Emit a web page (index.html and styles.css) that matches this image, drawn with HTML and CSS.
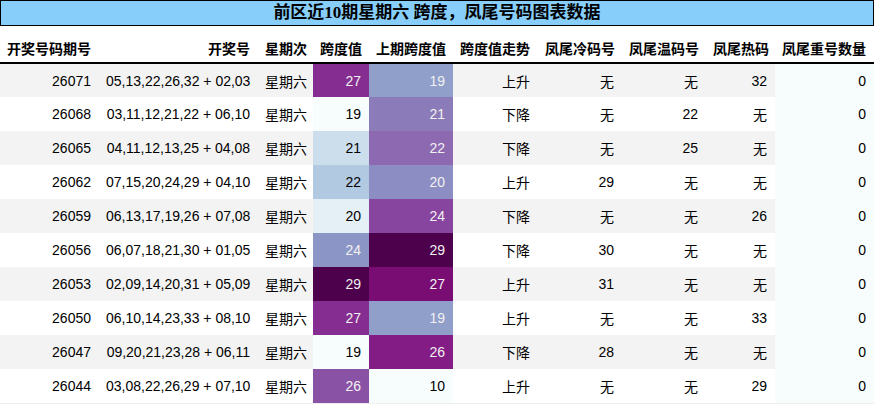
FILE: index.html
```html
<!DOCTYPE html>
<html lang="zh">
<head>
<meta charset="utf-8">
<link rel="stylesheet" href="styles.css">
</head>
<body>
<div class="wrap">
  <div class="title">前区近10期星期六 跨度，凤尾号码图表数据</div>
  <table class="grid">
    <colgroup>
      <col class="c1"><col class="c2"><col class="c3"><col class="c4"><col class="c5">
      <col class="c6"><col class="c7"><col class="c8"><col class="c9"><col class="c10">
    </colgroup>
    <thead>
      <tr>
        <th>开奖号码期号</th><th>开奖号</th><th>星期次</th><th>跨度值</th><th>上期跨度值</th>
        <th>跨度值走势</th><th>凤尾冷码号</th><th>凤尾温码号</th><th>凤尾热码</th><th>凤尾重号数量</th>
      </tr>
    </thead>
    <tbody>
      <tr class="odd">
        <td>26071</td><td>05,13,22,26,32 + 02,03</td><td>星期六</td>
        <td class="dk" style="background:#852d90">27</td><td class="dk" style="background:#909eca">19</td>
        <td>上升</td><td>无</td><td>无</td><td>32</td><td class="z">0</td>
      </tr>
      <tr>
        <td>26068</td><td>03,11,12,21,22 + 06,10</td><td>星期六</td>
        <td style="background:#f7fcfd">19</td><td class="dk" style="background:#8c7bb9">21</td>
        <td>下降</td><td>无</td><td>22</td><td>无</td><td class="z">0</td>
      </tr>
      <tr class="odd">
        <td>26065</td><td>04,11,12,13,25 + 04,08</td><td>星期六</td>
        <td style="background:#ccddec">21</td><td class="dk" style="background:#8c69b0">22</td>
        <td>下降</td><td>无</td><td>25</td><td>无</td><td class="z">0</td>
      </tr>
      <tr>
        <td>26062</td><td>07,15,20,24,29 + 04,10</td><td>星期六</td>
        <td style="background:#b2cae1">22</td><td class="dk" style="background:#8c8dc2">20</td>
        <td>上升</td><td>29</td><td>无</td><td>无</td><td class="z">0</td>
      </tr>
      <tr class="odd">
        <td>26059</td><td>06,13,17,19,26 + 07,08</td><td>星期六</td>
        <td style="background:#e5eff6">20</td><td class="dk" style="background:#88459f">24</td>
        <td>下降</td><td>无</td><td>无</td><td>26</td><td class="z">0</td>
      </tr>
      <tr>
        <td>26056</td><td>06,07,18,21,30 + 01,05</td><td>星期六</td>
        <td class="dk" style="background:#8c96c6">24</td><td class="dk" style="background:#4d004b">29</td>
        <td>下降</td><td>30</td><td>无</td><td>无</td><td class="z">0</td>
      </tr>
      <tr class="odd">
        <td>26053</td><td>02,09,14,20,31 + 05,09</td><td>星期六</td>
        <td class="dk" style="background:#4d004b">29</td><td class="dk" style="background:#790d74">27</td>
        <td>上升</td><td>31</td><td>无</td><td>无</td><td class="z">0</td>
      </tr>
      <tr>
        <td>26050</td><td>06,10,14,23,33 + 08,10</td><td>星期六</td>
        <td class="dk" style="background:#852d90">27</td><td class="dk" style="background:#909eca">19</td>
        <td>上升</td><td>无</td><td>无</td><td>33</td><td class="z">0</td>
      </tr>
      <tr class="odd">
        <td>26047</td><td>09,20,21,23,28 + 06,11</td><td>星期六</td>
        <td style="background:#f7fcfd">19</td><td class="dk" style="background:#831c85">26</td>
        <td>下降</td><td>28</td><td>无</td><td>无</td><td class="z">0</td>
      </tr>
      <tr>
        <td>26044</td><td>03,08,22,26,29 + 07,10</td><td>星期六</td>
        <td class="dk" style="background:#8a52a5">26</td><td style="background:#f7fcfd">10</td>
        <td>上升</td><td>无</td><td>无</td><td>29</td><td class="z">0</td>
      </tr>
    </tbody>
  </table>
</div>
</body>
</html>
```

FILE: styles.css
```css
html, body {
  margin: 0;
  padding: 0;
  background: #ffffff;
}

.wrap {
  width: 874px;
}

.title {
  box-sizing: border-box;
  height: 26px;
  background: #87cefa;
  border: 1px solid #000000;
  text-align: center;
  font-family: "Liberation Serif", "Noto Sans CJK SC", serif;
  font-weight: bold;
  font-size: 17px;
  line-height: 23px;
  color: #000000;
}

.grid {
  width: 874px;
  border-collapse: collapse;
  table-layout: fixed;
  font-family: "Liberation Sans", "Noto Sans CJK SC", sans-serif;
  font-size: 14px;
  color: #000000;
}

.c1 { width: 99px; }
.c2 { width: 159px; }
.c3 { width: 55px; }
.c4 { width: 56px; }
.c5 { width: 84px; }
.c6 { width: 85px; }
.c7 { width: 84px; }
.c8 { width: 84px; }
.c9 { width: 69px; }
.c10 { width: 99px; }

.grid th {
  height: 37px;
  padding: 8px 8px 0 7px;
  box-sizing: border-box;
  text-align: right;
  font-weight: bold;
  white-space: nowrap;
  border-bottom: 2px solid #000000;
  background: #ffffff;
}

.grid th:first-child {
  text-align: left;
}

.grid td {
  height: 34px;
  padding: 0 8px 0 7px;
  box-sizing: border-box;
  text-align: right;
  white-space: nowrap;
}

.grid tbody tr.odd td {
  background-color: #f3f3f3;
}

.grid tbody tr:last-child td {
  border-bottom: 1px solid #eeeeee;
}

.grid td.dk {
  color: #f1f1f1;
}

.grid tbody tr td.z {
  background-color: #f7fcfd;
}
```
